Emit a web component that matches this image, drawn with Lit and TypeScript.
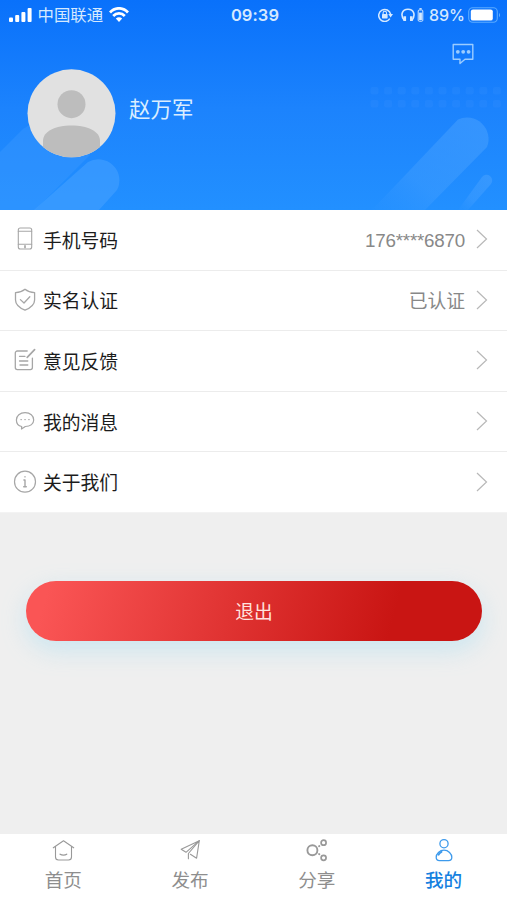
import { LitElement, html, css, svg } from "lit";
import { customElement } from "lit/decorators.js";
import { classMap } from "lit/directives/class-map.js";

const icon = (w: number, h: number, body: unknown) =>
  html`<svg width=${w} height=${h} viewBox="0 0 ${w} ${h}" fill="none" stroke="currentColor" stroke-width="1.1" stroke-linecap="round" stroke-linejoin="round">${body}</svg>`;

const rowIcons = {
  phone: icon(24, 24, svg`<rect x="5.3" y="1" width="13.4" height="21" rx="2"/><path d="M5.3 4.2H18.7M5.3 17.3H18.7"/><path d="M12 18.800v1.700" stroke-width="1.7"/>`),
  shield: icon(24, 24, svg`<path d="M12 1.2C9.2 3.5 6.2 4.4 2.5 4.6V12C2.5 17 6.8 20 12 22.2 17.2 20 21.600 17 21.600 12V4.6C17.8 4.4 14.8 3.5 12 1.2Z" stroke-width="1.3"/><path d="M7.4 11.6l3.6 3.4 5.8-6.2" stroke-width="1.300"/>`),
  edit: icon(24, 24, svg`<path d="M14.2 3H4.300a2 2 0 0 0-2 2V19.600a2 2 0 0 0 2 2H17.400a2 2 0 0 0 2-2V10.100" stroke-width="1.300"/><path d="M6.500 8.300H12M6.500 13H14.800M7 17H14.800" stroke-width="1.300"/><path d="M14.200 9.400L21.600 1.600" stroke-width="1.700"/>`),
  chat: icon(24, 24, svg`<path d="M8.7 17.500C5.300 16.700 3.400 13.900 3.400 10.900 3.400 6.700 7 3.700 12.100 3.700S20.700 6.700 20.700 10.900 16.800 17.300 12.300 17.500L8.500 20Z" stroke-width="1.200"/><path d="M8 10.600h.3M11.900 10.600h.3M15.800 10.600h.3" stroke-width="1.400"/>`),
  info: icon(24, 24, svg`<circle cx="12" cy="11.700" r="10.500" stroke-width="1.200"/><path d="M12 10V16.700M12 6.700v.2M10.900 10H12M10.700 16.700H13.300" stroke-width="1.400"/>`),
};

const tabIcons = {
  home: icon(24, 24, svg`<path d="M2.300 9.800L12.500 2.800l10.200 7M4.500 8.700V19a3 3 0 0 0 3 3H17.500a3 3 0 0 0 3-3V8.700"/><path d="M9.100 16.200C10.900 17.400 14.100 17.400 15.700 16.200" stroke-width="1.300"/>`),
  send: icon(24, 24, svg`<path d="M21.300 2.700L3.200 11.300l4.800 3L21.300 2.700 18.600 20.200 12.400 16.300"/><path d="M21.300 2.700L10.400 15.500V20.800"/>`),
  share: icon(24, 24, svg`<circle cx="7.400" cy="12.300" r="5" stroke-width="1.900"/><circle cx="18.600" cy="4.700" r="2.500" stroke-width="1.700"/><circle cx="18.600" cy="19.800" r="2.500" stroke-width="1.700"/><path d="M14 8.300l.4-.3M14 16l.4.3" stroke-width="1.800"/>`),
  person: icon(24, 24, svg`<circle cx="12" cy="5.700" r="4.100" stroke-width="1.300"/><path d="M12 12.200C7.600 12.200 4.200 16 4.200 19.300 4.200 21.800 5.700 22.700 7.500 22.700H16.500C18.300 22.700 19.800 21.800 19.800 19.300 19.800 16 16.400 12.200 12 12.200Z" stroke-width="1.300"/><path d="M6.600 16.700C7.200 15.300 8.200 14.400 9.500 13.800" stroke-width="1.900"/>`),
};

const rows = [
  { icon: rowIcons.phone, label: "手机号码", value: "176****6870" },
  { icon: rowIcons.shield, label: "实名认证", value: "已认证" },
  { icon: rowIcons.edit, label: "意见反馈", value: "" },
  { icon: rowIcons.chat, label: "我的消息", value: "" },
  { icon: rowIcons.info, label: "关于我们", value: "" },
];

const tabs = [
  { icon: tabIcons.home, label: "首页", active: false },
  { icon: tabIcons.send, label: "发布", active: false },
  { icon: tabIcons.share, label: "分享", active: false },
  { icon: tabIcons.person, label: "我的", active: true },
];

@customElement("status-bar")
class StatusBar extends LitElement {
  static styles = css`
    :host { display: flex; height: 30px; align-items: center; color: #d5e9ff; }
    .side { flex: 1 1 0; display: flex; align-items: center; }
    .left { padding-left: 9px; }
    .right { justify-content: flex-end; padding-right: 6px; }
    svg { display: block; flex: none; position: relative; top: -0.5px; }
    .carrier { font-size: 16.4px; margin: 0 6px 0 5.5px; line-height: 30px; }
    .time { font: 600 16.500px/30px Inter, sans-serif; letter-spacing: 0.1px; }
    .percent { font: 500 16px/30px Inter, sans-serif; margin: 0 3px 0 5px; }
    .phones { margin-left: 8px; }
  `;
  render() {
    return html`
      <div class="side left">
        <svg width="23" height="14" viewBox="0 0 23 14" fill="#fff"><rect y="9.5" width="4" height="4.5" rx="1"/><rect x="6.2" y="7" width="4" height="7" rx="1"/><rect x="12.4" y="4" width="4" height="10" rx="1"/><rect x="18.6" width="4" height="14" rx="1"/></svg>
        <span class="carrier">中国联通</span>
        <svg width="20" height="15" viewBox="0 0 20 15" fill="none" stroke="#fff" stroke-width="2.7"><path d="M1 5.5C6-.1 14-.1 19 5.5M4.2 9C7.4 5.5 12.6 5.5 15.8 9"/><path d="M6.8 11.6Q10 8.7 13.2 11.6L10 15Z" fill="#fff" stroke="none"/></svg>
      </div>
      <span class="time">09:39</span>
      <div class="side right">
        <svg width="15" height="14" viewBox="0 0 15 14" fill="none" stroke="currentColor"><path d="M11.8 10.7A6 6 0 1 1 12.6 6.2" stroke-width="1.5"/><path d="M10.3 6H15L12.6 9.4Z" fill="currentColor" stroke="none"/><rect x="4" y="6" width="5.6" height="4.4" rx=".6" fill="currentColor" stroke="none"/><path d="M5.1 6V5a1.7 1.7 0 0 1 3.4 0V6" stroke-width="1.1"/></svg>
        <svg class="phones" width="23" height="14" viewBox="0 0 23 14" fill="none" stroke="currentColor"><path d="M3.4 12.6C-1.2 7 1.2 1.2 7 1.2S15 7 10.8 12.6" stroke-width="1.6"/><path d="M3.8 8.3V13M10.3 8.3V13" stroke-width="2.6"/><rect x="17.200" y="2" width="4.600" height="11.2" rx="1" stroke-width="1"/><path d="M18.400.8H20.700" stroke-width="1.4"/><path d="M19.500 4.600V12" stroke-width="2.800"/></svg>
        <span class="percent">89%</span>
        <svg width="33" height="16" viewBox="0 0 33 16"><rect x=".7" y=".7" width="28.6" height="14.6" rx="4" fill="none" stroke="#5babff" stroke-width="1.1"/><rect x="2.8" y="2.4" width="22" height="11.2" rx="2.2" fill="#fff"/><path d="M31 5.700Q33 8 31 10.300Z" fill="#65b0ff"/></svg>
      </div>
    `;
  }
}

@customElement("profile-header")
class ProfileHeader extends LitElement {
  static styles = css`
    :host { display: block; height: 210px; position: relative; overflow: hidden; background: linear-gradient(#0971fb, #1c83fd 52%, #2290ff); box-sizing: border-box; }
    .backdrop { position: absolute; inset: 0; width: 100%; height: 100%; }
    .content { position: relative; }
    .actions { display: flex; justify-content: flex-end; height: 39px; padding: 13px 33px 0 0; box-sizing: border-box; color: #9bccff; }
    .profile { display: flex; align-items: center; padding-left: 27px; gap: 13px; height: 89px; }
    .name { color: #daedff; font-size: 21.5px; line-height: 30px; margin-top: -7px; }
    svg { display: block; }
  `;
  render() {
    const dots = Array.from({ length: 20 }, (_, i) => svg`<rect x=${370.5 + (i % 10) * 13.6} y=${i < 10 ? 87 : 100} width="8" height="7.5" rx="2"/>`);
    return html`
      <svg class="backdrop" viewBox="0 0 507 210">
        <defs>
          <linearGradient id="beam" x1="1" y1="0" x2="0" y2="1"><stop offset=".1" stop-color="#4ca3ff" stop-opacity=".5"/><stop offset=".65" stop-color="#4ca3ff" stop-opacity=".35"/><stop offset="1" stop-color="#3b9aff" stop-opacity="0.05"/></linearGradient>
        </defs>
        <g fill="#3992ff" opacity=".24">${dots}</g>
        <path d="M372 210L458 119.500A21.500 21.500 0 0 1 487 147L425 210Z" fill="url(#beam)"/>
        <path d="M458 210L482 177A5.500 5.500 0 0 1 491 184L468 210Z" fill="url(#beam)"/>
        <path d="M0 152L23 129Q45 114 68 130L90 155 35 210H0Z" fill="#3b99ff" opacity=".42"/>
        <path d="M34 210L88 162A21 21 0 0 1 117 190L99 210Z" fill="#45a0ff" opacity=".6"/>
      </svg>
      <div class="content">
        <status-bar></status-bar>
        <div class="actions">
          <svg width="22" height="22" viewBox="0 0 22 22" fill="none" stroke="currentColor" stroke-width="1.4"><path d="M1.200 1.500H20.800V16.200H13L8 20.500V16.200H1.200Z" stroke-linejoin="round"/><g fill="currentColor" stroke="none"><circle cx="5.800" cy="8.800" r="1.900"/><circle cx="11.200" cy="8.800" r="1.900"/><circle cx="16.600" cy="8.800" r="1.900"/></g></svg>
        </div>
        <div class="profile">
          <svg width="89" height="89" viewBox="0 0 89 89"><defs><clipPath id="disc"><circle cx="44.500" cy="44.300" r="44"/></clipPath></defs><circle cx="44.500" cy="44.300" r="44" fill="#e1e1e1"/><g fill="#bdbdbd" clip-path="url(#disc)"><circle cx="44.500" cy="35.200" r="14"/><path d="M16 89V72C16 62 29 56.500 44.500 56.500S73 62 73 72V89Z"/></g></svg>
          <span class="name">赵万军</span>
        </div>
      </div>
    `;
  }
}

@customElement("app-root")
class AppRoot extends LitElement {
  static styles = css`
    :host { display: flex; flex-direction: column; height: 900px; background: #efefef; font-family: "Liberation Sans", "Noto Sans CJK SC", sans-serif; overflow: hidden; }
    svg { display: block; flex: none; }
    profile-header { flex: none; }
    .list { background: #fff; }
    .row { display: flex; align-items: center; height: 60.6px; box-sizing: border-box; border-bottom: 1px solid #ececec; padding: 0 19px 1px 13px; color: #a6a6a6; }
    .row:last-child { border-bottom-color: #f3f3f3; }
    .label { flex: 1; margin-left: 6px; color: #1c1c1c; font-size: 18.8px; line-height: 28px; padding-top: 5px; }
    .value { color: #888; font-size: 18.8px; line-height: 28px; margin-right: 11px; padding-top: 5px; }
    .number { letter-spacing: -0.22px; padding-top: 4px; }
    .arrow { color: #b8b8b8; }
    .body { flex: 1; padding: 68px 25px 0 26px; }
    .logout { display: block; width: 100%; height: 60px; border: 0; border-radius: 30px; font: inherit; font-size: 18.8px; color: #ffe3df; background: linear-gradient(105deg, #fa5555 5%, #c91513 80%); box-shadow: 0 9px 24px rgba(150, 218, 243, 0.4); padding: 0 0 1px; }
    .tabs { display: grid; grid-template-columns: repeat(4, 1fr); height: 66px; background: #fff; box-sizing: border-box; padding-top: 4px; }
    .tab { display: flex; flex-direction: column; align-items: center; color: #999; font-size: 18.6px; line-height: 28px; gap: 5px; }
    .tab span { color: #8e8e8e; }
    .active { color: #3d9aec; }
    .active span { color: #1581df; font-weight: 500; }
  `;
  render() {
    return html`
      <profile-header></profile-header>
      <div class="list">
        ${rows.map((r) => html`<div class="row">
          ${r.icon}<span class="label">${r.label}</span><span class=${classMap({ value: true, number: r.value.includes("*") })}>${r.value}</span>
          <svg class="arrow" width="12" height="20" viewBox="0 0 12 20" fill="none" stroke="currentColor" stroke-width="1.2"><path d="M1 1l9.500 9L1 19"/></svg>
        </div>`)}
      </div>
      <div class="body"><button class="logout">退出</button></div>
      <nav class="tabs">
        ${tabs.map((t) => html`<div class=${classMap({ tab: true, active: t.active })}>${t.icon}<span>${t.label}</span></div>`)}
      </nav>
    `;
  }
}
